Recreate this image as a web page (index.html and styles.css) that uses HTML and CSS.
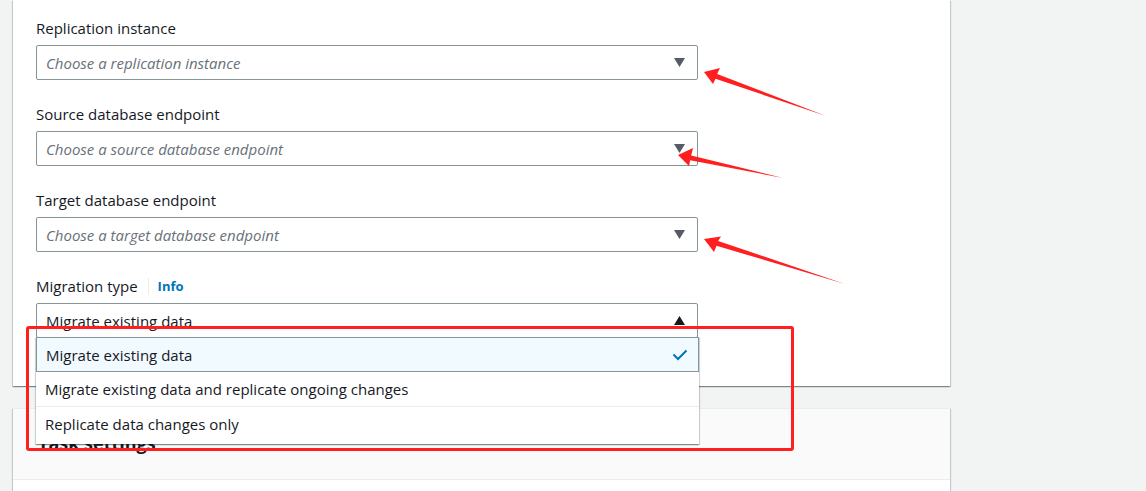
FILE: index.html
```html
<!DOCTYPE html>
<html lang="en">
<head>
<meta charset="utf-8">
<title>Create database migration task</title>
<link rel="stylesheet" href="styles.css">
</head>
<body>
<div class="page">
  <section class="card card-form">
    <div class="field">
      <div class="label-row"><span class="label">Replication instance</span></div>
      <div class="select">
        <span class="placeholder">Choose a replication instance</span>
        <svg class="caret" width="11" height="9" viewBox="0 0 11 9"><polygon points="0,0 11,0 5.5,9" fill="#545b64"/></svg>
      </div>
    </div>
    <div class="field">
      <div class="label-row"><span class="label">Source database endpoint</span></div>
      <div class="select">
        <span class="placeholder">Choose a source database endpoint</span>
        <svg class="caret" width="11" height="9" viewBox="0 0 11 9"><polygon points="0,0 11,0 5.5,9" fill="#545b64"/></svg>
      </div>
    </div>
    <div class="field">
      <div class="label-row"><span class="label">Target database endpoint</span></div>
      <div class="select">
        <span class="placeholder">Choose a target database endpoint</span>
        <svg class="caret" width="11" height="9" viewBox="0 0 11 9"><polygon points="0,0 11,0 5.5,9" fill="#545b64"/></svg>
      </div>
    </div>
    <div class="field">
      <div class="label-row"><span class="label">Migration type</span><span class="divider"></span><span class="info">Info</span></div>
      <div class="select-wrap">
        <div class="select open">
          <span class="value">Migrate existing data</span>
          <svg class="caret" width="11" height="9" viewBox="0 0 11 9"><polygon points="0,9 11,9 5.5,0" fill="#16191f"/></svg>
        </div>
        <ul class="dropdown">
          <li class="option selected"><span>Migrate existing data</span>
            <svg class="check" width="16" height="12" viewBox="0 0 16 12"><polyline points="1.5,5.5 6,10 14.5,1.5" fill="none" stroke="#0073bb" stroke-width="2"/></svg>
          </li>
          <li class="option">Migrate existing data and replicate ongoing changes</li>
          <li class="option last">Replicate data changes only</li>
        </ul>
      </div>
    </div>
  </section>

  <section class="card card-task">
    <div class="card-header"><h2>Task settings</h2></div>
    <div class="card-body"></div>
  </section>

  <div class="annot-box"></div>
  <svg class="annot-arrows" width="1146" height="491" viewBox="0 0 1146 491">
    <polygon fill="#ff1f1f" points="704,72 720,68 717.1,73.9 826,116 715.5,78.7 713,84"/>
    <polygon fill="#ff1f1f" points="678,155 693,148 691.2,155.4 783,178 690.2,160.2 689,166"/>
    <polygon fill="#ff1f1f" points="704,239 721,236.5 718.1,240.9 845,284 716.5,245.7 714,252"/>
  </svg>
</div>
</body>
</html>
```

FILE: styles.css
```css
* { box-sizing: border-box; }

html, body {
  margin: 0;
  padding: 0;
  background: #f2f3f3;
  overflow: hidden;
}

body {
  font-family: "Open Sans", "Noto Sans", "Liberation Sans", sans-serif;
  font-size: 15px;
  color: #16191f;
}

.page {
  position: relative;
  width: 1146px;
  height: 491px;
  padding-left: 13px;
  overflow: hidden;
}

.card {
  width: 937px;
  background: #fff;
  box-shadow: 0 1px 1px 0 rgba(0, 28, 36, 0.3), 1px 1px 1px 0 rgba(0, 28, 36, 0.15), -1px 1px 1px 0 rgba(0, 28, 36, 0.15);
}

.card-form {
  padding: 17px 0 48px 23px;
  display: flex;
  flex-direction: column;
  gap: 23px;
}

.field {
  display: flex;
  flex-direction: column;
  gap: 6px;
}

.label-row {
  display: flex;
  align-items: center;
  height: 22px;
  line-height: 22px;
}

.label {
  font-size: 15px;
  color: #16191f;
}

.divider {
  width: 1px;
  height: 17px;
  background: #eaeded;
  margin: 0 9px 0 10px;
}

.info {
  font-size: 13px;
  font-weight: 700;
  color: #0073bb;
}

.select-wrap {
  position: relative;
  width: 662px;
}

.select {
  width: 662px;
  height: 35px;
  border: 1px solid #879596;
  border-radius: 2px;
  display: flex;
  align-items: center;
  justify-content: space-between;
  padding: 0 12px 0 9px;
  background: #fff;
}

.placeholder {
  font-style: italic;
  color: #687078;
}

.value {
  color: #16191f;
}

.caret {
  display: block;
}

.dropdown {
  position: absolute;
  top: 34px;
  left: 0;
  width: 663px;
  margin: 0;
  padding: 0 0 4px 0;
  list-style: none;
  background: #fff;
  z-index: 5;
  box-shadow: 0 1px 1px 0 rgba(0, 28, 36, 0.3), 1px 1px 1px 0 rgba(0, 28, 36, 0.15), -1px 1px 1px 0 rgba(0, 28, 36, 0.15);
}

.option {
  height: 34px;
  display: flex;
  align-items: center;
  justify-content: space-between;
  padding: 0 10px 0 9px;
  color: #16191f;
  border-top: 1px solid #eaeded;
}

.option.selected {
  height: 35px;
  background: #f1faff;
  border: 1px solid #879596;
  padding-left: 9px;
}

.option.selected + .option {
  border-top: none;
}

.check {
  display: block;
}

.card-task {
  margin-top: 22px;
  border-top: 1px solid #eaeded;
}

.card-header {
  background: #fafafa;
  border-bottom: 1px solid #eaeded;
  padding: 22px 0 24px 25px;
}

.card-header h2 {
  margin: 0;
  font-size: 18px;
  line-height: 24px;
  font-weight: 700;
  color: #16191f;
}

.card-body {
  height: 40px;
}

.annot-box {
  position: absolute;
  left: 26px;
  top: 326px;
  width: 768px;
  height: 125px;
  border: 3px solid #ff1f1f;
  border-radius: 3px;
  z-index: 10;
  pointer-events: none;
}

.annot-arrows {
  position: absolute;
  left: 0;
  top: 0;
  z-index: 11;
  pointer-events: none;
}
```
